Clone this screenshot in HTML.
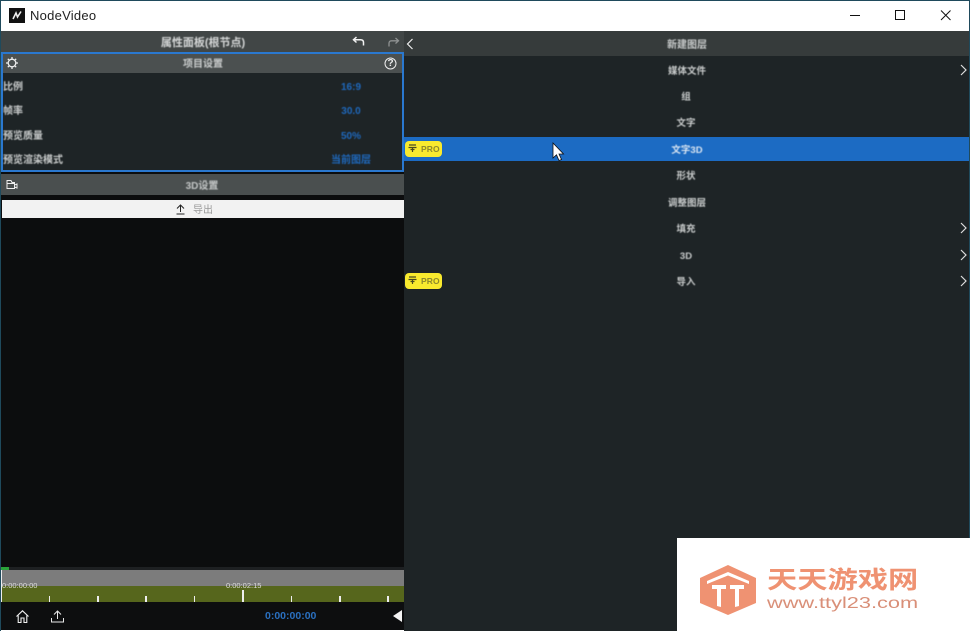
<!DOCTYPE html>
<html><head><meta charset="utf-8">
<style>
html,body{margin:0;padding:0;width:970px;height:631px;overflow:hidden;background:#fff}
*{box-sizing:border-box}
body{position:relative;font-family:"Liberation Sans","Noto Sans CJK SC",sans-serif}
.a{position:absolute}
.t{position:absolute;font-weight:bold;font-size:10px;line-height:14px;color:#c9cccc;white-space:nowrap;filter:blur(.4px)}
.r{font-size:9.5px}
.c{transform:translateX(-50%)}
.b{color:#1f69bd}
.pro{position:absolute;left:405px;width:37px;height:16px;background:#f9ea2e;border-radius:4px}
.pro span{position:absolute;left:16px;top:1px;font-size:8.5px;line-height:14px;font-weight:bold;color:#8f8a2c;letter-spacing:.1px}
.pro svg{position:absolute;left:3px;top:3px}
svg{position:absolute;overflow:visible}
</style></head><body>

<div class="a" style="left:0;top:0;width:970px;height:1px;background:#1f4a5c"></div>
<div class="a" style="left:0;top:0;width:1px;height:631px;background:#1f4a5c"></div>
<div class="a" style="left:969px;top:0;width:1px;height:631px;background:#1f4a5c"></div>

<!-- title bar -->
<div class="a" style="left:9px;top:8px;width:16px;height:15px;background:#111"></div>
<svg style="left:9px;top:8px" width="16" height="15"><path d="M4 11 L7 5 L8.500 9 L12 3.500" fill="none" stroke="#eee" stroke-width="1.600"/></svg>
<div class="a" style="left:30px;top:7px;font-size:13px;line-height:17px;color:#222;letter-spacing:.25px">NodeVideo</div>
<svg style="left:850px;top:10px" width="110" height="12"><path d="M0 5.500H10" stroke="#111" stroke-width="1"/><rect x="45.500" y=".5" width="9" height="9" fill="none" stroke="#111"/><path d="M91 .5 L100.500 10 M100.500 .5 L91 10" stroke="#111" stroke-width="1"/></svg>

<!-- left panel -->
<div class="a" style="left:1px;top:31px;width:403px;height:21px;background:#414646"></div>
<div class="t c" style="left:203px;top:36px;font-size:11px;color:#d6d8d8">属性面板(根节点)</div>
<svg style="left:352px;top:36px" width="13" height="11"><path d="M4.500 1 L1.500 3.800 L4.500 6.500 M1.500 3.800 H8.500 Q11.500 3.800 11.500 6.500 V9.500" fill="none" stroke="#f2f2f2" stroke-width="1.500"/></svg>
<svg style="left:388px;top:37px" width="12" height="11"><path d="M7.500 1 L10.500 3.800 L7.500 6.500 M10.500 3.800 H3.500 Q1 3.800 1 6.500 V9.500" fill="none" stroke="#8f9292" stroke-width="1.300"/></svg>

<div class="a" style="left:1px;top:52px;width:403px;height:120px;background:#1e2426;border:2px solid #2a78cf"></div>
<div class="a" style="left:3px;top:54px;width:399px;height:19px;background:#4b5050"></div>
<svg style="left:6px;top:57px" width="12" height="12"><circle cx="6" cy="6" r="3.800" fill="none" stroke="#eee" stroke-width="1.300"/><path d="M6 0V2 M6 10V12 M0 6H2 M10 6H12 M1.800 1.800L3.200 3.200 M8.800 8.800L10.200 10.200 M1.800 10.200L3.200 8.800 M8.800 3.200L10.200 1.800" stroke="#eee" stroke-width="1.300"/></svg>
<div class="t c" style="left:203px;top:58px">项目设置</div>
<svg style="left:384px;top:57px" width="13" height="13"><circle cx="6.500" cy="6.500" r="5.500" fill="none" stroke="#eee" stroke-width="1"/></svg>
<div class="a" style="left:384px;top:57px;width:13px;text-align:center;font-size:10px;line-height:13px;font-weight:bold;color:#eee">?</div>

<div class="t" style="left:3px;top:81px">比例</div>
<div class="t" style="left:3px;top:105px">帧率</div>
<div class="t" style="left:3px;top:130px">预览质量</div>
<div class="t" style="left:3px;top:154px">预览渲染模式</div>
<div class="t c b" style="left:351px;top:81px">16:9</div>
<div class="t c b" style="left:351px;top:105px">30.0</div>
<div class="t c b" style="left:351px;top:130px">50%</div>
<div class="t c b" style="left:351px;top:154px">当前图层</div>

<div class="a" style="left:1px;top:172px;width:403px;height:2px;background:#0c0d0e"></div>
<div class="a" style="left:1px;top:174px;width:403px;height:21px;background:#4a4f4f"></div>
<svg style="left:6px;top:179px" width="12" height="11"><path d="M1 4V1.500H5L6 3.500H8.500V5 M1 4.500H8.500V9.500H1Z M8.500 6L11 5V9L8.500 8" fill="none" stroke="#eee" stroke-width="1"/></svg>
<div class="t c" style="left:202px;top:180px;color:#c3c6c6">3D设置</div>

<div class="a" style="left:1px;top:195px;width:403px;height:373px;background:#0c0d0e"></div>
<div class="a" style="left:2px;top:200px;width:402px;height:18px;background:#f2f2f2"></div>
<svg style="left:175px;top:204px" width="11" height="11"><path d="M5.500 8V1 M2 4.500L5.500 1L9 4.500 M1.500 10H9.500" fill="none" stroke="#222" stroke-width="1"/></svg>
<div class="a" style="left:193px;top:204px;font-size:10px;line-height:14px;color:#999">导出</div>

<!-- timeline -->
<div class="a" style="left:1px;top:567px;width:403px;height:3px;background:#1e2022"></div>
<div class="a" style="left:1px;top:567px;width:8px;height:3px;background:#2aa33a"></div>
<div class="a" style="left:1px;top:570px;width:403px;height:16px;background:#7c7c7c"></div>
<div class="a" style="left:1px;top:586px;width:403px;height:16px;background:#56661c"></div>
<div class="a" style="left:1px;top:570px;width:1px;height:32px;background:#eee"></div>
<div class="a" style="left:2px;top:581px;font-size:7.500px;line-height:10px;color:#ddd">0:00:00:00</div>
<div class="a" style="left:226px;top:581px;font-size:7.500px;line-height:10px;color:#ddd">0:00:02:15</div>
<div class="a" style="left:49px;top:596px;width:1px;height:6px;background:#eee"></div>
<div class="a" style="left:97px;top:596px;width:2px;height:6px;background:#eee"></div>
<div class="a" style="left:145px;top:596px;width:2px;height:6px;background:#eee"></div>
<div class="a" style="left:194px;top:596px;width:1px;height:6px;background:#eee"></div>
<div class="a" style="left:242px;top:590px;width:2px;height:12px;background:#eee"></div>
<div class="a" style="left:291px;top:596px;width:1px;height:6px;background:#eee"></div>
<div class="a" style="left:339px;top:596px;width:2px;height:6px;background:#eee"></div>
<div class="a" style="left:387px;top:596px;width:2px;height:6px;background:#eee"></div>

<div class="a" style="left:1px;top:602px;width:403px;height:28px;background:#0d0e0f"></div>
<svg style="left:16px;top:610px" width="13" height="13"><path d="M.500 6.500L6.500 .800L12.500 6.500 M2.200 5.500V12.500H5V8H8V12.500H10.800V5.500" fill="none" stroke="#f0f0f0" stroke-width="1.100"/></svg>
<svg style="left:51px;top:610px" width="13" height="13"><path d="M6.500 9V1 M3 4.500L6.500 1L10 4.500 M.500 8V12H12.500V8" fill="none" stroke="#e8e8e8" stroke-width="1"/></svg>
<div class="a" style="left:265px;top:609px;font-size:10.500px;line-height:15px;font-weight:bold;color:#2a70c0">0:00:00:00</div>
<svg style="left:393px;top:610px" width="10" height="12"><path d="M9 0V12L0 6Z" fill="#f4f4f4"/></svg>

<!-- right panel -->
<div class="a" style="left:404px;top:31px;width:565px;height:600px;background:#1e2426"></div>
<div class="a" style="left:404px;top:31px;width:565px;height:25px;background:#363b3b"></div>
<svg style="left:406px;top:38px" width="8" height="12"><path d="M6.500 1L1.500 6L6.500 11" fill="none" stroke="#eee" stroke-width="1.200"/></svg>
<div class="t c" style="left:687px;top:39px">新建图层</div>
<div class="a" style="left:404px;top:137px;width:565px;height:24px;background:#1c6bc3"></div>

<div class="t r c" style="left:687px;top:65px">媒体文件</div>
<div class="t r c" style="left:686px;top:91px">组</div>
<div class="t r c" style="left:686px;top:117px">文字</div>
<div class="t r c" style="left:687px;top:144px;color:#dbe6f2">文字3D</div>
<div class="t r c" style="left:686px;top:170px">形状</div>
<div class="t r c" style="left:687px;top:197px">调整图层</div>
<div class="t r c" style="left:686px;top:223px">填充</div>
<div class="t r c" style="left:686px;top:250px">3D</div>
<div class="t r c" style="left:686px;top:276px">导入</div>

<svg style="left:960px;top:64px" width="7" height="12"><path d="M1 1L6 6L1 11" fill="none" stroke="#ddd" stroke-width="1.200"/></svg>
<svg style="left:960px;top:222px" width="7" height="12"><path d="M1 1L6 6L1 11" fill="none" stroke="#ddd" stroke-width="1.200"/></svg>
<svg style="left:960px;top:249px" width="7" height="12"><path d="M1 1L6 6L1 11" fill="none" stroke="#ddd" stroke-width="1.200"/></svg>
<svg style="left:960px;top:275px" width="7" height="12"><path d="M1 1L6 6L1 11" fill="none" stroke="#ddd" stroke-width="1.200"/></svg>

<div class="pro" style="top:141px"><svg width="10" height="9"><path d="M1 1H8M.500 3.500H8.500M2.500 5.500H6.500M4.500 3V8" stroke="#4a4a20" stroke-width="1.200"/></svg><span>PRO</span></div>
<div class="pro" style="top:273px"><svg width="10" height="9"><path d="M1 1H8M.500 3.500H8.500M2.500 5.500H6.500M4.500 3V8" stroke="#4a4a20" stroke-width="1.200"/></svg><span>PRO</span></div>

<!-- cursor -->
<svg style="left:552px;top:142px" width="13" height="20"><path d="M1 1V16L4.500 12.800L7 18.500L9.500 17.500L7 12H11.500Z" fill="#fff" stroke="#111" stroke-width=".8"/></svg>

<!-- watermark -->
<div class="a" style="left:677px;top:538px;width:293px;height:93px;background:#fff"></div>
<svg style="left:699px;top:564px" width="58" height="52"><path d="M29 1L57 14V39L29 51L1 39V14Z" fill="#ef9272"/><path d="M8 17L29 8L50 17V20L29 11.500L8 20Z M13 21H27V25H22V43L18 42V25H13Z M31 21H45V25H40V42L36 43V25H31Z" fill="#fff"/></svg>
<div class="a" style="left:767px;top:567px;font-size:24px;line-height:27px;font-weight:bold;color:#ef9272;white-space:nowrap;transform:scaleX(1.26);transform-origin:0 0">天天游戏网</div>
<div class="a" style="left:767px;top:595px;font-size:16px;line-height:18px;color:#d98f78;white-space:nowrap;transform:scaleX(1.36);transform-origin:0 0">www.ttyl23.com</div>

</body></html>
